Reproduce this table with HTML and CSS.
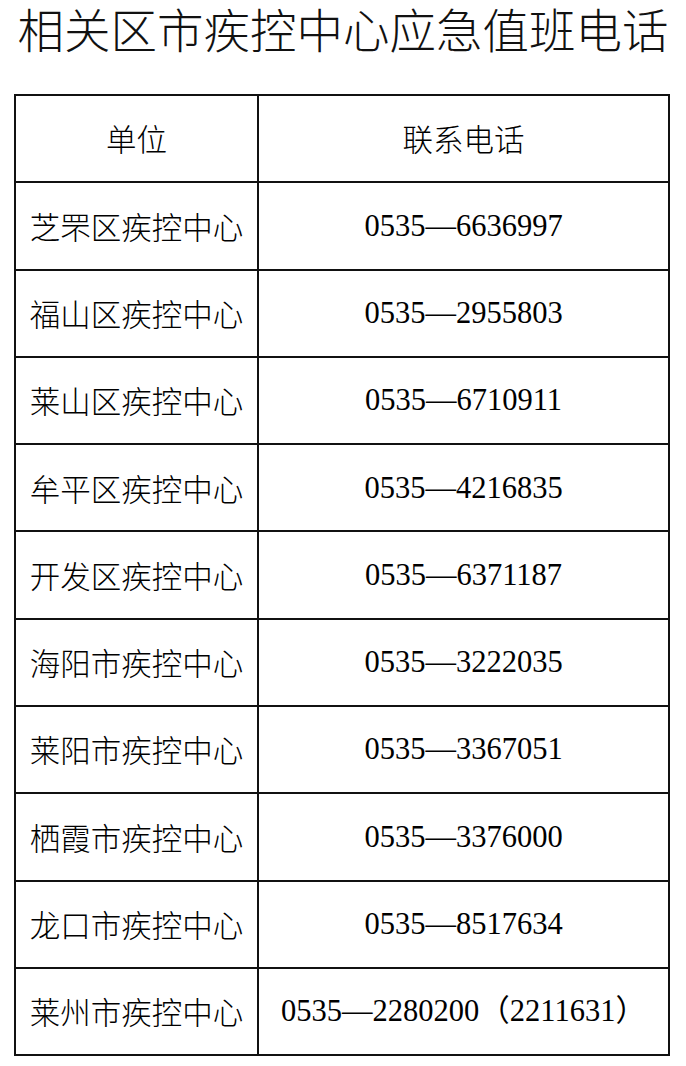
FILE: index.html
```html
<!DOCTYPE html>
<html lang="zh">
<head>
<meta charset="utf-8">
<title>相关区市疾控中心应急值班电话</title>
<link rel="stylesheet" href="styles.css">
</head>
<body>
<h1 class="title">相关区市疾控中心应急值班电话</h1>
<table class="phones">
  <thead>
    <tr><th class="unit">单位</th><th class="tel-head">联系电话</th></tr>
  </thead>
  <tbody>
    <tr><td class="unit">芝罘区疾控中心</td><td class="tel">0535—6636997</td></tr>
    <tr><td class="unit">福山区疾控中心</td><td class="tel">0535—2955803</td></tr>
    <tr><td class="unit">莱山区疾控中心</td><td class="tel">0535—6710911</td></tr>
    <tr><td class="unit">牟平区疾控中心</td><td class="tel">0535—4216835</td></tr>
    <tr><td class="unit">开发区疾控中心</td><td class="tel">0535—6371187</td></tr>
    <tr><td class="unit">海阳市疾控中心</td><td class="tel">0535—3222035</td></tr>
    <tr><td class="unit">莱阳市疾控中心</td><td class="tel">0535—3367051</td></tr>
    <tr><td class="unit">栖霞市疾控中心</td><td class="tel">0535—3376000</td></tr>
    <tr><td class="unit">龙口市疾控中心</td><td class="tel">0535—8517634</td></tr>
    <tr><td class="unit">莱州市疾控中心</td><td class="tel">0535—2280200<span class="paren">（2211631）</span></td></tr>
  </tbody>
</table>
</body>
</html>
```
FILE: styles.css
```css
html, body {
  margin: 0;
  padding: 0;
  background: #ffffff;
  color: #000000;
}
body {
  width: 686px;
  font-family: "Noto Sans CJK SC", "Noto Sans", sans-serif;
}
.title {
  margin: 0;
  padding-top: 0;
  height: 60px;
  line-height: 56px;
  font-size: 46.5px;
  font-weight: 300;
  text-align: center;
  white-space: nowrap;
  color: #111111;
}
.phones {
  margin: 34px 0 0 14px;
  width: 656px;
  border-collapse: collapse;
  table-layout: fixed;
}
.phones th,
.phones td {
  border: 2px solid #111111;
  height: 85.3px;
  padding: 0;
  font-weight: 400;
  text-align: center;
  vertical-align: middle;
  line-height: 1;
}
.phones .unit {
  width: 241px;
  font-size: 30.5px;
  font-weight: 300;
  font-family: "Noto Sans CJK SC", sans-serif;
}
.phones .tel-head {
  font-size: 30.5px;
  font-weight: 300;
}
.phones .tel {
  font-family: "Liberation Serif", "Noto Sans CJK SC", serif;
  font-size: 30.5px;
}
.phones .paren {
  font-family: "Liberation Serif", "Noto Sans CJK SC", serif;
}
```
